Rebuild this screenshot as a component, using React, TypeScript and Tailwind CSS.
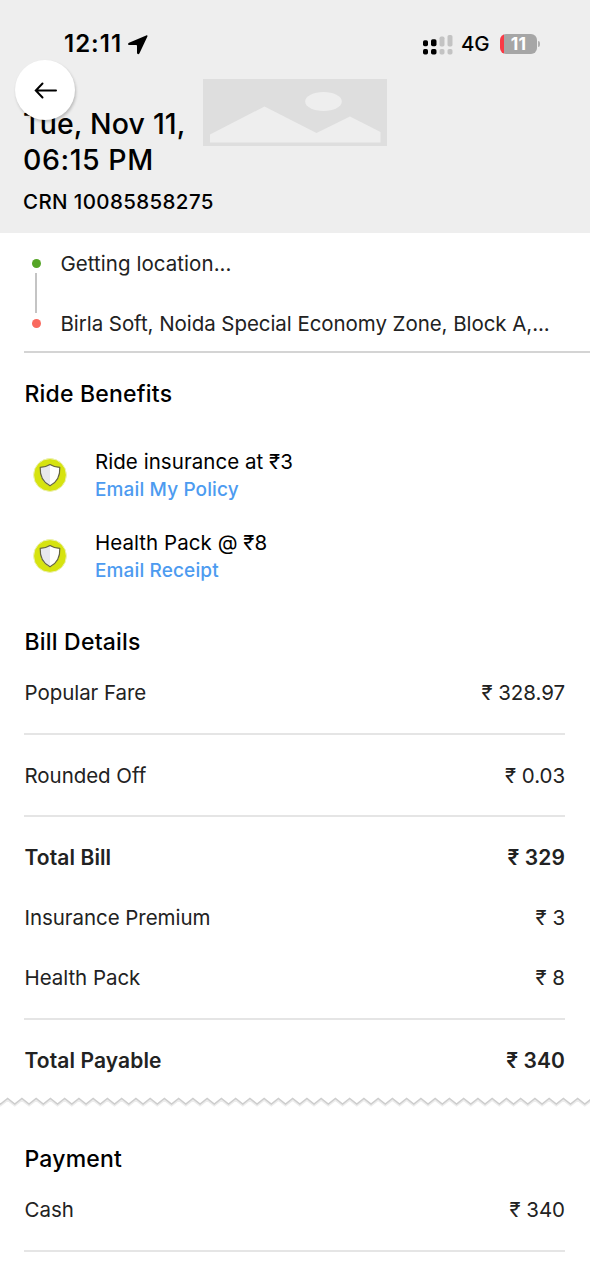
import type { ReactNode } from "react";

function StatusBar() {
  return (
    <div className="flex h-[60px] items-start justify-between pt-[30px] pl-[64px] pr-[50px]">
      <div className="flex h-7 items-center">
        <span className="w-[63px] text-[24px] font-semibold tracking-[1px] whitespace-nowrap">12:11</span>
        <svg width="22" height="22" viewBox="0 0 22 22" className="mt-px">
          <path
            d="M19.200 1.400 2 8.700c-1.500.7-1.200 2.400.3 2.400h6.900c.5 0 .8.3.8.8v6.900c0 1.500 1.800 1.900 2.500.4L20.400 2.600c.4-.9-.3-1.600-1.200-1.200Z"
            fill="#000"
          />
        </svg>
      </div>
      <div className="flex h-7 items-center">
        <svg width="30" height="20" viewBox="0 0 30 20" className="mt-px">
          <g fill="#000">
            <rect x="0" y="5.300" width="5" height="6" rx="1.700" />
            <rect x="8" y="4.300" width="5.500" height="7" rx="1.700" />
            <rect x="0" y="14" width="5" height="5.500" rx="1.700" />
            <rect x="8" y="14" width="5.500" height="5.500" rx="1.700" />
          </g>
          <g fill="#c3c3c3">
            <rect x="16.500" y="1.500" width="5" height="10" rx="1.700" />
            <rect x="24.500" y="0" width="5" height="11.500" rx="1.700" />
            <rect x="16.500" y="14" width="5" height="5.500" rx="1.700" />
            <rect x="24.500" y="14" width="5" height="5.500" rx="1.700" />
          </g>
        </svg>
        <span className="ml-[8px] w-[39px] pt-px text-[20.5px] font-medium tracking-[-0.1px] whitespace-nowrap">4G</span>
        <div className="flex h-[20px] w-[37px] items-center justify-center overflow-hidden rounded-[6px] bg-linear-to-r from-[#fa3a46] from-[4px] to-[#a6a6a6] to-[4px] text-[17.5px] leading-[20px] font-bold tracking-[0.3px] text-white">
          11
        </div>
        <div className="ml-px h-[6px] w-[2px] rounded-r-full bg-[#b0b0b0]" />
      </div>
    </div>
  );
}

function MapPlaceholder() {
  return (
    <svg width="184" height="67" viewBox="0 0 184 67" className="mt-[19px] shrink-0">
      <rect width="184" height="67" fill="#dedede" />
      <ellipse cx="120.500" cy="22.500" rx="18.300" ry="9.500" fill="#eee" />
      <path d="M7 55.500 61.500 27.500 113.500 54 147 37.500 177.500 53V63.500H7Z" fill="#eee" />
    </svg>
  );
}

function ShieldBadge() {
  return (
    <svg width="34" height="34" viewBox="0 0 34 34" className="shrink-0">
      <circle cx="17" cy="17" r="16.400" fill="#d6e30f" stroke="#ecf0b4" strokeWidth="1" />
      <path d="M17 6.500c3 1.900 6 2.700 9.800 2.900.4 8.700-2.200 14.700-9.800 18.400C9.400 24.100 6.800 18.100 7.200 9.400 11 9.200 14 8.400 17 6.500Z" fill="#fff" />
      <path d="M17 6.500v21.300C9.400 24.100 6.800 18.100 7.200 9.400 11 9.200 14 8.400 17 6.500Z" fill="#e7e8ed" />
      <path
        d="M17 6.500c3 1.900 6 2.700 9.800 2.900.4 8.700-2.200 14.700-9.800 18.400C9.400 24.100 6.800 18.100 7.200 9.400 11 9.200 14 8.400 17 6.500Z"
        fill="none"
        stroke="#65653f"
        strokeWidth="1.200"
        strokeLinejoin="round"
      />
    </svg>
  );
}

function Benefit({ title, action }: { title: string; action: string }) {
  return (
    <div className="flex h-[81px] items-start pl-[33px]">
      <div className="pt-[10px]">
        <ShieldBadge />
      </div>
      <div className="ml-[28px] flex flex-col">
        <span className="h-[28px] text-[20.5px] leading-[27px] tracking-[0.05px] text-black">{title}</span>
        <a className="h-[27px] text-[19px] leading-[27px] font-medium tracking-[0.13px] text-[#4d9bf0]">{action}</a>
      </div>
    </div>
  );
}

function BillRow({ label, value, bold = false }: { label: string; value: string; bold?: boolean }) {
  return (
    <div
      className={`flex h-[60px] items-center justify-between pl-[0.5px] text-[#222] ${
        bold ? "text-[21px] font-semibold tracking-[0.1px]" : "text-[20.5px] tracking-[-0.05px]"
      }`}
    >
      <span>{label}</span>
      <span>{value}</span>
    </div>
  );
}

function Divider() {
  return <div className="h-[2px] bg-[#e5e5e5]" />;
}

function Heading({ children }: { children: ReactNode }) {
  return (
    <h2 className="flex h-[42px] items-center pl-[0.5px] text-[23px] font-medium tracking-[0.2px] text-black">
      {children}
    </h2>
  );
}

const teeth = Array.from(
  { length: 43 },
  (_, i) => `${(-6.6 + i * 14.25 - 7.12).toFixed(2)},7 ${(-6.6 + i * 14.25).toFixed(2)},1.500`,
).join(" ");

function TornEdge() {
  return (
    <svg width="590" height="12" viewBox="0 0 590 12" className="block">
      <polyline points={teeth} fill="none" stroke="#ececec" strokeWidth="2" transform="translate(0 1.500)" />
      <polyline points={teeth} fill="none" stroke="#cdcdcd" strokeWidth="1.500" />
    </svg>
  );
}

export default function App() {
  return (
    <main className="h-[1280px] w-[590px] overflow-hidden bg-white font-['Inter','Noto_Sans',sans-serif] text-black">
      <header className="relative h-[233px] bg-[#eee]">
        <StatusBar />
        <div className="flex h-[114px] pl-[23px]">
          <h1 className="w-[180px] pt-[46px] text-[28.5px] leading-[36px] font-medium whitespace-nowrap">
            <span className="tracking-[0.15px]">Tue, Nov 11,</span>
            <br />
            <span className="tracking-[0.55px]">06:15 PM</span>
          </h1>
          <MapPlaceholder />
        </div>
        <p className="pt-[14px] pl-[23px] text-[20.5px] leading-[28px] font-medium tracking-[0.38px]">CRN 10085858275</p>
        <button className="absolute top-[60px] left-[15px] flex size-[60px] items-center justify-center rounded-full bg-white shadow-[1px_2px_3px_rgba(0,0,0,0.22)]">
          <svg width="24" height="18" viewBox="0 0 24 18" className="ml-[2px]" fill="none" stroke="#000" strokeWidth="2" strokeLinecap="round">
            <path d="M22 9.500H2M8.500 2.500 1.800 9.500 8.500 16.500" />
          </svg>
        </button>
      </header>

      <section className="ml-[24px] flex h-[119.500px] border-b-2 border-[#d4d4d4] text-[20.5px] text-[#222]">
        <div className="flex w-[24px] flex-col items-center pt-[26px]">
          <span className="size-[9px] rounded-full bg-[#55a526]" />
          <span className="mt-[5px] h-[40px] w-[2px] bg-[#c4c4c4]" />
          <span className="mt-[6px] size-[9px] rounded-full bg-[#f9695e]" />
        </div>
        <div className="ml-[12px] pt-px pl-[0.5px] whitespace-nowrap">
          <div className="flex h-[60px] items-center tracking-[0.05px]">Getting location...</div>
          <div className="flex h-[60px] items-center tracking-[-0.06px]">
            Birla Soft, Noida Special Economy Zone, Block A,...
          </div>
        </div>
      </section>

      <section className="pt-[20.500px]">
        <div className="pl-[24px]">
          <Heading>Ride Benefits</Heading>
        </div>
        <div className="pt-[33px]">
          <Benefit title="Ride insurance at ₹3" action="Email My Policy" />
          <Benefit title="Health Pack @ ₹8" action="Email Receipt" />
        </div>
      </section>

      <section className="pt-[11px] pr-[25px] pl-[24px]">
        <Heading>Bill Details</Heading>
        <BillRow label="Popular Fare" value="₹ 328.97" />
        <div className="pt-[10px] pb-[11px]">
          <Divider />
        </div>
        <BillRow label="Rounded Off" value="₹ 0.03" />
        <div className="pt-[9px] pb-[11px]">
          <Divider />
        </div>
        <BillRow label="Total Bill" value="₹ 329" bold />
        <BillRow label="Insurance Premium" value="₹ 3" />
        <BillRow label="Health Pack" value="₹ 8" />
        <div className="pt-[10px] pb-[11px]">
          <Divider />
        </div>
        <BillRow label="Total Payable" value="₹ 340" bold />
      </section>

      <div className="pt-[6px]">
        <TornEdge />
      </div>

      <section className="pt-[29px] pr-[25px] pl-[24px]">
        <Heading>Payment</Heading>
        <BillRow label="Cash" value="₹ 340" />
        <div className="pt-[10px]">
          <Divider />
        </div>
      </section>
    </main>
  );
}
